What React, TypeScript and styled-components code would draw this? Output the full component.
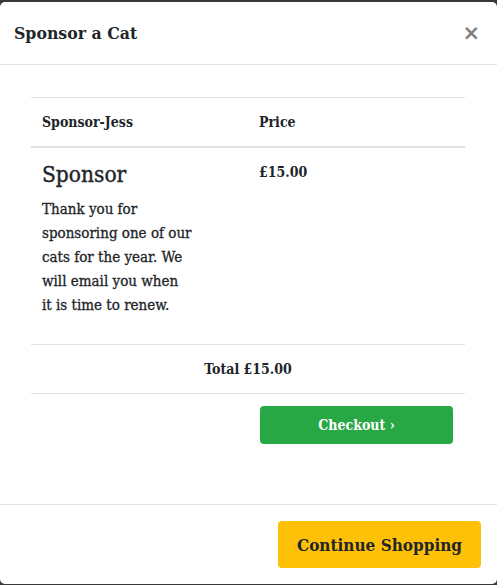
import React from 'react';
import styled, { createGlobalStyle } from 'styled-components';

const GlobalStyle = createGlobalStyle`
    html, body {
        margin: 0;
        padding: 0;
        background: #3a3a3a;
        height: 100%;
        overflow: hidden;
    }
    body {
        font-family: "DejaVu Serif Condensed", "DejaVu Serif", "Liberation Serif", serif;
        font-stretch: condensed;
        color: #212529;
    }
`

const Modal = styled.div`
    margin-top: 2px;
    height: 582px;
    background: #fff;
    border-radius: 5px;
    display: flex;
    flex-direction: column;
    box-sizing: border-box;
`

const Header = styled.div`
    display: flex;
    align-items: center;
    justify-content: space-between;
    padding: 16px 17px 16px 14px;
    border-bottom: 1px solid #dee2e6;
`

const Title = styled.h5`
    margin: 0;
    font-size: 17.5px;
    line-height: 30px;
    font-weight: 700;
`

const Close = styled.button`
    border: 0;
    background: none;
    padding: 0;
    font-family: "DejaVu Sans", sans-serif;
    font-size: 21px;
    line-height: 24px;
    font-weight: 700;
    color: #000;
    opacity: 0.5;
    cursor: pointer;
`

const Body = styled.div`
    flex: 1;
    padding: 32px 32px 0 31px;
`

const Table = styled.table`
    width: 100%;
    border-collapse: collapse;
    table-layout: fixed;
`

const HeadCell = styled.th`
    text-align: left;
    font-size: 14px;
    font-weight: 700;
    line-height: 24px;
    padding: 12px 11px;
    border-top: 1px solid #dee2e6;
    border-bottom: 2px solid #dee2e6;
`

const Cell = styled.td<{ $center?: boolean }>`
    vertical-align: top;
    padding: 12px 11px;
    font-size: 14px;
    line-height: 24px;
    border-top: 1px solid #dee2e6;
    text-align: ${p => (p.$center ? 'center' : 'left')};
`

const Price = styled.span`
    font-weight: 700;
    font-size: 14px;
`

const ItemName = styled.h4`
    margin: 0 0 8px;
    font-size: 22.5px;
    line-height: 29px;
    font-weight: 500;
    -webkit-text-stroke: 0.4px #212529;
`

const Description = styled.p`
    margin: 0 0 15px;
    font-size: 15px;
    line-height: 24px;
    font-weight: 500;
    -webkit-text-stroke: 0.3px #212529;
`

const TotalRow = styled.tr`
    border-bottom: 1px solid #dee2e6;
`

const Total = styled.strong`
    font-size: 14px;
`

const Actions = styled.div`
    display: flex;
    justify-content: flex-end;
    padding-top: 12px;
`

const ActionCol = styled.div`
    width: 50%;
    padding: 0 12px;
    box-sizing: border-box;
`

const Button = styled.button<{ $variant: 'success' | 'warning' }>`
    border: 0;
    border-radius: 4px;
    font-family: inherit;
    font-stretch: inherit;
    font-weight: 700;
    cursor: pointer;
    background: ${p => (p.$variant === 'success' ? '#28a745' : '#ffc107')};
    color: ${p => (p.$variant === 'success' ? '#fff' : '#212529')};
`

const CheckoutButton = styled(Button)`
    width: 100%;
    height: 38px;
    font-size: 14px;
`

const Footer = styled.div`
    display: flex;
    justify-content: flex-end;
    padding: 16px;
    border-top: 1px solid #dee2e6;
`

const ContinueButton = styled(Button)`
    width: 203px;
    height: 47px;
    font-size: 17px;
    font-weight: 600;
`

const App = () => {
    return (
        <>
            <GlobalStyle />
            <Modal>
                <Header>
                    <Title>Sponsor a Cat</Title>
                    <Close aria-label="Close">×</Close>
                </Header>
                <Body>
                    <Table>
                        <thead>
                            <tr>
                                <HeadCell>Sponsor-Jess</HeadCell>
                                <HeadCell>Price</HeadCell>
                            </tr>
                        </thead>
                        <tbody>
                            <tr>
                                <Cell>
                                    <ItemName>Sponsor</ItemName>
                                    <Description>
                                        Thank you for<br />
                                        sponsoring one of our<br />
                                        cats for the year. We<br />
                                        will email you when<br />
                                        it is time to renew.
                                    </Description>
                                </Cell>
                                <Cell><Price>£15.00</Price></Cell>
                            </tr>
                            <TotalRow>
                                <Cell colSpan={2} $center><Total>Total £15.00</Total></Cell>
                            </TotalRow>
                        </tbody>
                    </Table>
                    <Actions>
                        <ActionCol>
                            <CheckoutButton $variant="success">Checkout ›</CheckoutButton>
                        </ActionCol>
                    </Actions>
                </Body>
                <Footer>
                    <ContinueButton $variant="warning">Continue Shopping</ContinueButton>
                </Footer>
            </Modal>
        </>
    );
};

export default App;
